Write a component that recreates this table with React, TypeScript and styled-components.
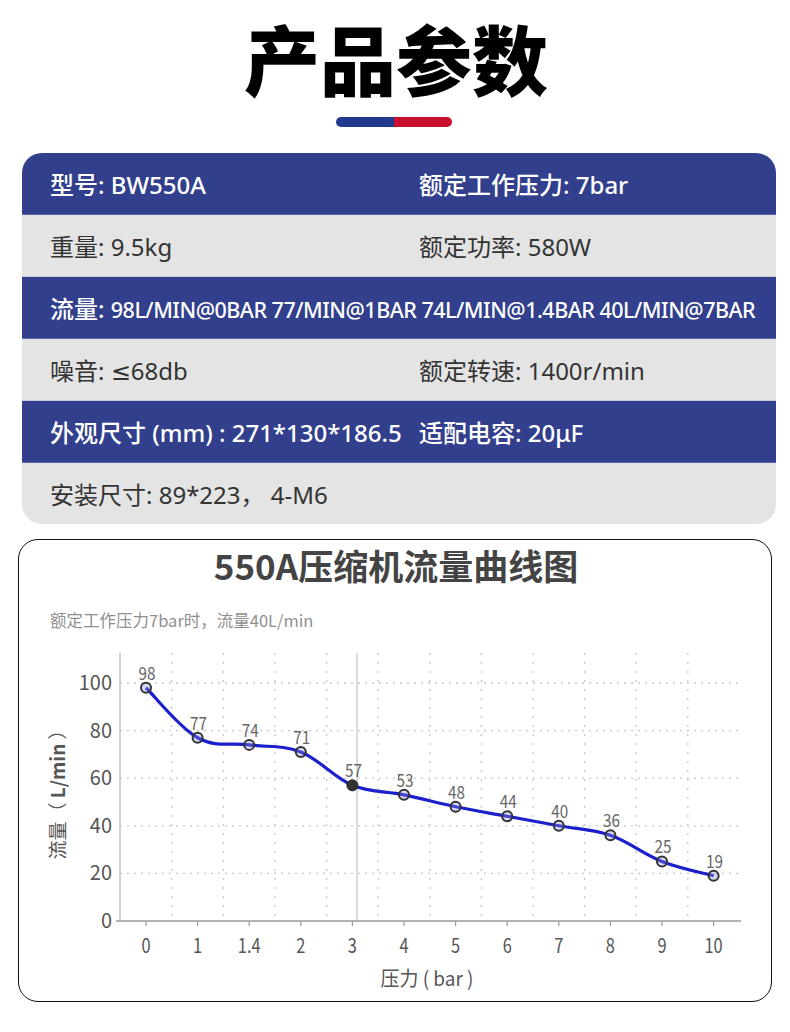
import React from "react";
import styled, { createGlobalStyle } from "styled-components";

const Global = createGlobalStyle`
  html, body { margin: 0; padding: 0; background: #ffffff; }
  body { font-family: "Noto Sans", "DejaVu Sans", "Noto Sans CJK SC", sans-serif; width: 790px; }
`;

const Page = styled.div`
  display: flex;
  flex-direction: column;
  padding-top: 12px;
  padding-bottom: 30px;
`;

const Heading = styled.h1`
  margin: 0;
  text-align: center;
  font-family: "Noto Sans CJK SC", sans-serif;
  font-weight: 900;
  font-size: 76px;
  line-height: 90px;
  color: #000;
  padding-left: 2px;
`;

const Rule = styled.div`
  align-self: center;
  margin-left: -2px;
  margin-top: 15px;
  width: 116px;
  height: 10px;
  border-radius: 5px;
  background: linear-gradient(to right, #213a8e 0 50%, #c8102e 50% 100%);
`;

const Table = styled.div`
  margin: 26px 0 0 22px;
  width: 754px;
  border-radius: 20px;
  overflow: hidden;
  display: flex;
  flex-direction: column;
`;

const Row = styled.div<{ $dark: boolean }>`
  display: grid;
  grid-template-columns: 369px 1fr;
  align-items: center;
  height: 62px;
  padding-left: 28px;
  box-sizing: border-box;
  background: ${(p) => (p.$dark ? "#323f8c" : "#e4e4e4")};
  color: ${(p) => (p.$dark ? "#ffffff" : "#333333")};
  font-weight: ${(p) => (p.$dark ? 500 : 400)};
  font-size: 24px;
  border-bottom: 1px solid ${(p) => (p.$dark ? "#5d68a6" : "#c9cbd6")};
  &:last-child { border-bottom: none; height: 61px; }
`;

const Cell = styled.div<{ $span?: boolean }>`
  white-space: nowrap;
  grid-column: ${(p) => (p.$span ? "1 / span 2" : "auto")};
`;

const Narrow = styled.span`
  font-size: 21.5px;
  letter-spacing: -0.5px;
`;

const ChartCard = styled.div`
  margin: 15px 0 0 18px;
  width: 754px;
  box-sizing: border-box;
  border: 1px solid #111;
  border-radius: 20px;
  display: flex;
  flex-direction: column;
`;

const ChartTitle = styled.div`
  text-align: center;
  margin-top: 0;
  font-family: "Noto Sans CJK SC", sans-serif;
  font-weight: 700;
  font-size: 35px;
  line-height: 50px;
  color: #444;
  padding-left: 2px;
`;

const ChartSub = styled.div`
  margin: 18px 0 0 31px;
  font-family: "Noto Sans CJK SC", sans-serif;
  font-size: 16.5px;
  line-height: 24px;
  color: #8f8f8f;
`;

const ChartSvg = styled.svg`
  display: block;
  margin-top: 7px;
  width: 752px;
  height: 362px;
  font-family: "Noto Sans CJK SC", sans-serif;
`;

const data: [string, number][] = [
  ["0", 98], ["1", 77], ["1.4", 74], ["2", 71], ["3", 57], ["4", 53],
  ["5", 48], ["6", 44], ["7", 40], ["8", 36], ["9", 25], ["10", 19],
];

const X0 = 146;
const DX = 51.6;
const xAt = (i: number) => X0 + i * DX;
const yAt = (v: number) => 921 - v * 2.38;

function smoothPath(pts: [number, number][]) {
  let d = `M${pts[0][0]},${pts[0][1]}`;
  for (let i = 0; i < pts.length - 1; i++) {
    const p0 = pts[i - 1] || pts[i];
    const p1 = pts[i];
    const p2 = pts[i + 1];
    const p3 = pts[i + 2] || p2;
    const t = 0.18;
    const c1x = p1[0] + (p2[0] - p0[0]) * t;
    const c1y = p1[1] + (p2[1] - p0[1]) * t;
    const c2x = p2[0] - (p3[0] - p1[0]) * t;
    const c2y = p2[1] - (p3[1] - p1[1]) * t;
    d += ` C${c1x},${c1y} ${c2x},${c2y} ${p2[0]},${p2[1]}`;
  }
  return d;
}

const squeeze = (x: number, s: number) => `translate(${x} 0) scale(${s} 1) translate(${-x} 0)`;

function Chart() {
  const pts = data.map(([, v], i) => [xAt(i), yAt(v)] as [number, number]);
  const grid = [20, 40, 60, 80, 100];
  const mids = data.slice(1).map((_, i) => xAt(i) + DX / 2);
  return (
    <ChartSvg viewBox="0 0 752 362">
      <g transform="translate(-19,-639)">
        {grid.map((v) => (
          <line key={v} x1={120} x2={740} y1={yAt(v)} y2={yAt(v)} stroke="#c8c8c8" strokeWidth={1.3} strokeDasharray="2 5" />
        ))}
        {mids.map((x, i) => (
          <line key={i} x1={x} x2={x} y1={653} y2={921} stroke="#c8c8c8" strokeWidth={1.3} strokeDasharray="2 7" />
        ))}
        <line x1={357} x2={357} y1={653} y2={921} stroke="#cfcfcf" strokeWidth={1.5} />
        <line x1={120} x2={120} y1={653} y2={921} stroke="#c4c4c4" strokeWidth={1.5} />
        <line x1={116} x2={741} y1={921} y2={921} stroke="#9a9a9a" strokeWidth={1.5} />
        {data.map((_, i) => (
          <line key={i} x1={xAt(i)} x2={xAt(i)} y1={921} y2={926} stroke="#9a9a9a" strokeWidth={1.2} />
        ))}
        {[0, ...grid].map((v) => (
          <text key={v} x={112} y={yAt(v) + 7} fontSize={21} fill="#555" textAnchor="end" transform={squeeze(112, 0.95)}>
            {v}
          </text>
        ))}
        {data.map(([l], i) => (
          <text key={l} x={xAt(i)} y={953} fontSize={20} fill="#555" textAnchor="middle" transform={squeeze(xAt(i), 0.82)}>
            {l}
          </text>
        ))}
        <text x={427} y={986} fontSize={20} fill="#555" textAnchor="middle" transform={squeeze(427, 0.95)}>
          压力 ( bar )
        </text>
        <text x={0} y={0} fontSize={19} fill="#555" textAnchor="middle" transform="translate(65 790) rotate(-90)">
          流量（ <tspan fontWeight={700}>L/min</tspan> ）
        </text>
        <path d={smoothPath(pts)} fill="none" stroke="#1b20cc" strokeWidth={3.2} strokeLinejoin="round" />
        {pts.map(([x, y], i) =>
          data[i][1] === 57 ? (
            <circle key={i} cx={x} cy={y} r={5.5} fill="#333" stroke="#222" strokeWidth={1} />
          ) : (
            <circle key={i} cx={x} cy={y} r={5} fill="#8c90e0" fillOpacity={0.35} stroke="#333" strokeWidth={2} />
          )
        )}
        {pts.map(([x, y], i) => (
          <text key={i} x={x + 1} y={y - 8} fontSize={18} fill="#666" textAnchor="middle" transform={squeeze(x + 1, 0.85)}>
            {data[i][1]}
          </text>
        ))}
      </g>
    </ChartSvg>
  );
}

type RowData = { dark: boolean; cells: React.ReactNode[]; span?: boolean };

const rows: RowData[] = [
  { dark: true, cells: ["型号: BW550A", "额定工作压力: 7bar"] },
  { dark: false, cells: ["重量: 9.5kg", "额定功率: 580W"] },
  {
    dark: true,
    span: true,
    cells: [
      <>
        流量: <Narrow>98L/MIN@0BAR 77/MIN@1BAR 74L/MIN@1.4BAR 40L/MIN@7BAR</Narrow>
      </>,
    ],
  },
  { dark: false, cells: ["噪音: ≤68db", "额定转速: 1400r/min"] },
  { dark: true, cells: ["外观尺寸 (mm) : 271*130*186.5", "适配电容: 20μF"] },
  { dark: false, cells: ["安装尺寸: 89*223，  4-M6", ""] },
];

export default function App() {
  return (
    <>
      <Global />
      <Page>
        <Heading>产品参数</Heading>
        <Rule />
        <Table>
          {rows.map((r, i) => (
            <Row key={i} $dark={r.dark}>
              {r.cells.map((c, j) => (
                <Cell key={j} $span={r.span}>{c}</Cell>
              ))}
            </Row>
          ))}
        </Table>
        <ChartCard>
          <ChartTitle>550A压缩机流量曲线图</ChartTitle>
          <ChartSub>额定工作压力7bar时，流量40L/min</ChartSub>
          <Chart />
        </ChartCard>
      </Page>
    </>
  );
}
